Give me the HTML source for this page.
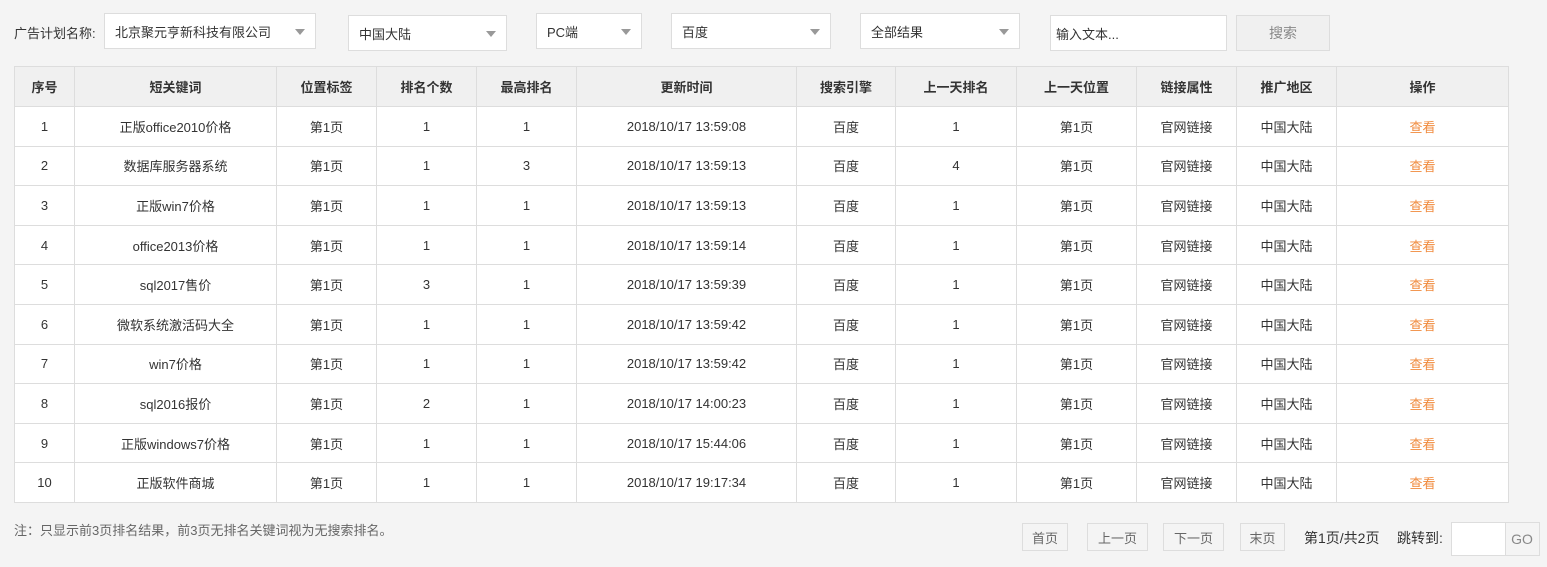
<!DOCTYPE html>
<html><head><meta charset="utf-8"><style>
*{box-sizing:border-box;margin:0;padding:0}
body{width:1547px;height:567px;background:#f4f4f4;font-family:"Liberation Sans","Noto Sans CJK SC",sans-serif;font-size:13px;color:#333;position:relative;overflow:hidden}
.a{position:absolute}
.sel{position:absolute;background:#fff;border:1px solid #ddd;padding-left:10px;display:flex;align-items:center;color:#333}
.sel:after{content:"";position:absolute;right:10px;top:50%;margin-top:-2px;border-left:5px solid transparent;border-right:5px solid transparent;border-top:6px solid #999}
.sel.noa:after{display:none}
table{position:absolute;left:14px;top:66px;width:1494px;border-collapse:collapse;background:#fff;table-layout:fixed}
td,th{border:1px solid #ddd;text-align:center;height:39.6px;font-weight:normal;color:#333;font-size:13px}
th{background:#f0f0f0;font-weight:bold;height:40px}
.o{color:#f08a3c}
.pb{position:absolute;top:523px;height:28px;border:1px solid #ddd;color:#666;display:flex;align-items:center;justify-content:center;background:#f4f4f4}
</style></head><body>
<div class="a" style="left:14px;top:23px">广告计划名称:</div>
<div class="sel" style="left:104px;top:13px;width:212px;height:36px">北京聚元亨新科技有限公司</div>
<div class="sel" style="left:348px;top:15px;width:159px;height:36px">中国大陆</div>
<div class="sel" style="left:536px;top:13px;width:106px;height:36px">PC端</div>
<div class="sel" style="left:671px;top:13px;width:160px;height:36px">百度</div>
<div class="sel" style="left:860px;top:13px;width:160px;height:36px">全部结果</div>
<div class="sel noa" style="left:1050px;top:15px;width:177px;height:36px;padding-left:5px">输入文本...</div>
<div class="a" style="left:1236px;top:15px;width:94px;height:36px;border:1px solid #ddd;background:#f0f0f0;color:#888;display:flex;align-items:center;justify-content:center;font-size:14px">搜索</div>
<table>
<colgroup><col style="width:60px"><col style="width:202px"><col style="width:100px"><col style="width:100px"><col style="width:100px"><col style="width:220px"><col style="width:99px"><col style="width:121px"><col style="width:120px"><col style="width:100px"><col style="width:100px"><col style="width:172px"></colgroup>
<tr><th>序号</th><th>短关键词</th><th>位置标签</th><th>排名个数</th><th>最高排名</th><th>更新时间</th><th>搜索引擎</th><th>上一天排名</th><th>上一天位置</th><th>链接属性</th><th>推广地区</th><th>操作</th></tr>
<tr><td>1</td><td>正版office2010价格</td><td>第1页</td><td>1</td><td>1</td><td>2018/10/17 13:59:08</td><td>百度</td><td>1</td><td>第1页</td><td>官网链接</td><td>中国大陆</td><td class="o">查看</td></tr>
<tr><td>2</td><td>数据库服务器系统</td><td>第1页</td><td>1</td><td>3</td><td>2018/10/17 13:59:13</td><td>百度</td><td>4</td><td>第1页</td><td>官网链接</td><td>中国大陆</td><td class="o">查看</td></tr>
<tr><td>3</td><td>正版win7价格</td><td>第1页</td><td>1</td><td>1</td><td>2018/10/17 13:59:13</td><td>百度</td><td>1</td><td>第1页</td><td>官网链接</td><td>中国大陆</td><td class="o">查看</td></tr>
<tr><td>4</td><td>office2013价格</td><td>第1页</td><td>1</td><td>1</td><td>2018/10/17 13:59:14</td><td>百度</td><td>1</td><td>第1页</td><td>官网链接</td><td>中国大陆</td><td class="o">查看</td></tr>
<tr><td>5</td><td>sql2017售价</td><td>第1页</td><td>3</td><td>1</td><td>2018/10/17 13:59:39</td><td>百度</td><td>1</td><td>第1页</td><td>官网链接</td><td>中国大陆</td><td class="o">查看</td></tr>
<tr><td>6</td><td>微软系统激活码大全</td><td>第1页</td><td>1</td><td>1</td><td>2018/10/17 13:59:42</td><td>百度</td><td>1</td><td>第1页</td><td>官网链接</td><td>中国大陆</td><td class="o">查看</td></tr>
<tr><td>7</td><td>win7价格</td><td>第1页</td><td>1</td><td>1</td><td>2018/10/17 13:59:42</td><td>百度</td><td>1</td><td>第1页</td><td>官网链接</td><td>中国大陆</td><td class="o">查看</td></tr>
<tr><td>8</td><td>sql2016报价</td><td>第1页</td><td>2</td><td>1</td><td>2018/10/17 14:00:23</td><td>百度</td><td>1</td><td>第1页</td><td>官网链接</td><td>中国大陆</td><td class="o">查看</td></tr>
<tr><td>9</td><td>正版windows7价格</td><td>第1页</td><td>1</td><td>1</td><td>2018/10/17 15:44:06</td><td>百度</td><td>1</td><td>第1页</td><td>官网链接</td><td>中国大陆</td><td class="o">查看</td></tr>
<tr><td>10</td><td>正版软件商城</td><td>第1页</td><td>1</td><td>1</td><td>2018/10/17 19:17:34</td><td>百度</td><td>1</td><td>第1页</td><td>官网链接</td><td>中国大陆</td><td class="o">查看</td></tr>
</table>
<div class="a" style="left:14px;top:520px;color:#666">注：只显示前3页排名结果，前3页无排名关键词视为无搜索排名。</div>
<div class="pb" style="left:1022px;width:46px">首页</div>
<div class="pb" style="left:1087px;width:61px">上一页</div>
<div class="pb" style="left:1163px;width:61px">下一页</div>
<div class="pb" style="left:1240px;width:45px">末页</div>
<div class="a" style="left:1304px;top:528px;color:#333;font-size:14px">第1页/共2页</div>
<div class="a" style="left:1397px;top:528px;color:#333;font-size:14px">跳转到:</div>
<div class="a" style="left:1451px;top:522px;width:55px;height:34px;border:1px solid #ddd;background:#fff"></div>
<div class="a" style="left:1505px;top:522px;width:35px;height:34px;border:1px solid #ddd;border-left:none;color:#888;display:flex;align-items:center;justify-content:center;font-size:14px">GO</div>
</body></html>
